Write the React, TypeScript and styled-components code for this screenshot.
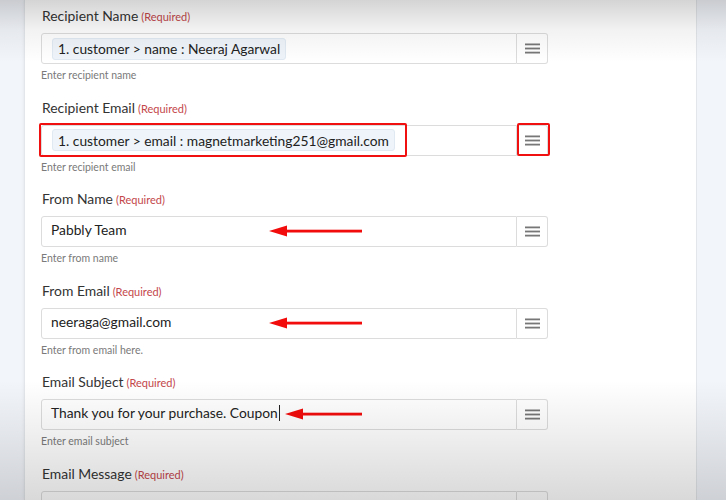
import React from "react";
import styled, { createGlobalStyle } from "styled-components";

const GlobalStyle = createGlobalStyle`
  html, body {
    margin: 0;
    padding: 0;
    height: 100%;
    overflow: hidden;
    background: #f3f6fb;
  }
  #root {
    height: 100%;
  }
`;

const Page = styled.div`
  position: relative;
  display: flex;
  height: 500px;
  width: 726px;
  font-family: Lato, "Open Sans", sans-serif;
  background: #f3f6fb;
  overflow: hidden;
`;

// darker bands from the video frame, top and bottom
const Vignette = styled.div`
  position: absolute;
  inset: 0;
  pointer-events: none;
  background: linear-gradient(
      to bottom,
      rgba(0, 0, 0, 0.17) 0px,
      rgba(0, 0, 0, 0.05) 30px,
      rgba(0, 0, 0, 0) 62px,
      rgba(0, 0, 0, 0) 380px,
      rgba(0, 0, 0, 0.06) 430px,
      rgba(0, 0, 0, 0.15) 500px
    );
`;

const Rail = styled.div<{ $w: number }>`
  width: ${(p) => p.$w}px;
  flex-shrink: 0;
  background: #f2f5fa;
`;

const Card = styled.div`
  flex: 1;
  background: #ffffff;
  border-left: 1px solid #e3e6ea;
  border-right: 1px solid #e3e6ea;
  box-shadow: 0 0 3px rgba(0, 0, 0, 0.08);
  padding: 7px 0 0 16px;
`;

const Field = styled.div`
  margin-bottom: 16.6px;
`;

const Label = styled.div`
  height: 18px;
  font-size: 13.9px;
  line-height: 18px;
  color: #333;
  margin-bottom: 8px;
  padding-left: 1px;
`;

const Req = styled.span`
  font-size: 11px;
  line-height: 1;
  color: #c4474b;
  margin-left: 3px;
`;

const Row = styled.div`
  position: relative;
  display: flex;
  width: 507px;
  height: 31px;
`;

const Input = styled.div`
  flex: 1;
  display: flex;
  align-items: center;
  border: 1px solid #dcdcdc;
  border-radius: 3px 0 0 3px;
  padding: 0 9px;
  font-size: 13.8px;
  color: #222;
  background: #fff;
`;

const Value = styled.span`
  display: inline-flex;
  align-items: center;
  margin-bottom: 4px;
`;

const Chip = styled.span`
  display: inline-flex;
  align-items: center;
  height: 20px;
  padding: 0 5px;
  margin-left: 1px;
  background: #eef4fa;
  border: 1px solid #e0e9f2;
  border-radius: 3px;
  font-size: 13.8px;
  color: #222;
`;

const Caret = styled.span`
  display: inline-block;
  width: 1px;
  height: 16px;
  background: #222;
  margin-left: 1px;
`;

const MenuButton = styled.div`
  width: 30px;
  display: flex;
  align-items: center;
  justify-content: center;
  border: 1px solid #dcdcdc;
  border-left: none;
  border-radius: 0 3px 3px 0;
  background: #fff;
`;

const Help = styled.div`
  font-size: 10.5px;
  line-height: 14px;
  height: 14px;
  color: #7a7a7a;
  margin-top: 4px;
`;

const RedBox = styled.div<{ $l: number; $t: number; $w: number; $h: number }>`
  position: absolute;
  left: ${(p) => p.$l}px;
  top: ${(p) => p.$t}px;
  width: ${(p) => p.$w}px;
  height: ${(p) => p.$h}px;
  border: 2px solid #f01010;
  border-radius: 2px;
  box-sizing: border-box;
  pointer-events: none;
`;

const ArrowSvg = styled.svg<{ $l: number }>`
  position: absolute;
  left: ${(p) => p.$l}px;
  top: 9px;
  pointer-events: none;
`;

const Burger = () => (
  <svg width="15" height="11" viewBox="0 0 15 11">
    <rect x="0" y="0.5" width="15" height="1.8" fill="#777" />
    <rect x="0" y="4.6" width="15" height="1.8" fill="#777" />
    <rect x="0" y="8.7" width="15" height="1.8" fill="#777" />
  </svg>
);

const Arrow = ({ left, len }: { left: number; len: number }) => (
  <ArrowSvg $l={left} width={len} height="12" viewBox={`0 0 ${len} 12`}>
    <polygon points="0,6 18,0.5 18,11.5" fill="#f20c0c" />
    <rect x="16" y="4.7" width={len - 16} height="2.8" fill="#f20c0c" />
  </ArrowSvg>
);

type FieldDef = {
  label: string;
  help: string;
  chip?: string;
  value?: string;
  caret?: boolean;
  arrow?: { left: number; len: number };
  marked?: boolean;
};

const fields: FieldDef[] = [
  {
    label: "Recipient Name",
    help: "Enter recipient name",
    chip: "1. customer > name : Neeraj Agarwal",
  },
  {
    label: "Recipient Email",
    help: "Enter recipient email",
    chip: "1. customer > email : magnetmarketing251@gmail.com",
    marked: true,
  },
  {
    label: "From Name",
    help: "Enter from name",
    value: "Pabbly Team",
    arrow: { left: 228, len: 93 },
  },
  {
    label: "From Email",
    help: "Enter from email here.",
    value: "neeraga@gmail.com",
    arrow: { left: 228, len: 93 },
  },
  {
    label: "Email Subject",
    help: "Enter email subject",
    value: "Thank you for your purchase. Coupon",
    caret: true,
    arrow: { left: 244, len: 77 },
  },
  {
    label: "Email Message",
    help: "",
  },
];

export default function App() {
  return (
    <>
      <GlobalStyle />
      <Page>
        <Rail $w={24} />
        <Card>
          {fields.map((f) => (
            <Field key={f.label}>
              <Label>
                {f.label}
                <Req>(Required)</Req>
              </Label>
              <Row>
                <Input>
                  {f.chip && <Chip>{f.chip}</Chip>}
                  {f.value && (
                    <Value>
                      {f.value}
                      {f.caret && <Caret />}
                    </Value>
                  )}
                </Input>
                <MenuButton>
                  <Burger />
                </MenuButton>
                {f.arrow && <Arrow left={f.arrow.left} len={f.arrow.len} />}
                {f.marked && (
                  <>
                    <RedBox $l={-2} $t={-2} $w={368} $h={34} />
                    <RedBox $l={476} $t={-2} $w={33} $h={33} />
                  </>
                )}
              </Row>
              {f.help && <Help>{f.help}</Help>}
            </Field>
          ))}
        </Card>
        <Rail $w={29} />
        <Vignette />
      </Page>
    </>
  );
}
